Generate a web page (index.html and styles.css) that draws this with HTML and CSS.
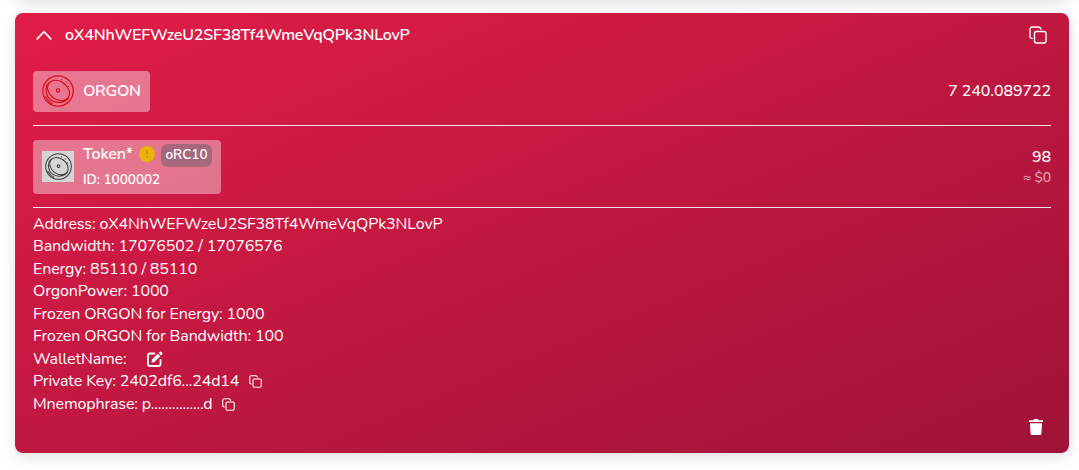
FILE: index.html
```html
<!DOCTYPE html>
<html lang="en">

<head>
    <meta charset="UTF-8">
    <meta name="viewport" content="width=device-width, initial-scale=1.0">
    <title>Wallet</title>
    <link rel="stylesheet" href="styles.css">
</head>

<body>
<svg class="sprite" width="0" height="0">
    <symbol id="copy" viewBox="0 0 18 18">
        <path d="M1 11.2V3.5Q1 1 3.5 1H9Q11.5 1 11.9 3.2M1 11.2Q1 12.3 3.2 12.4"/>
        <rect x="5.5" y="5.5" width="11.5" height="11.5" rx="2"/>
    </symbol>
    <symbol id="coin" viewBox="0 0 32 32">
        <circle cx="16" cy="16" r="15.2"/>
        <ellipse cx="16.5" cy="15.5" rx="12" ry="9" transform="rotate(38 16.5 15.5)"/>
        <path d="M6.500 8C2.500 13 3.500 21 9 25C14 28.500 22 28.500 26.500 23"/>
        <circle cx="16" cy="15.500" r="1.600"/>
        <path d="M3.300 21.500Q6 26.500 10.500 28.800"/>
        <path d="M19.500 4.500h.2M24 7h.2M22 9h.2M26.500 11.500h.2"/>
    </symbol>
</svg>
<div class="prev-card"></div>
<div class="card">
    <div class="header">
        <svg class="chevron" viewBox="0 0 16 10"><path d="M1.200 8.800L8 1.700L14.800 8.800"/></svg>
        <span class="title">oX4NhWEFWzeU2SF38Tf4WmeVqQPk3NLovP</span>
        <svg class="copy copy-lg"><use href="#copy"/></svg>
    </div>

    <div class="asset">
        <div class="badge">
            <svg class="coin"><use href="#coin"/></svg>
            <span class="name">ORGON</span>
        </div>
        <div class="balance">7 240.089722</div>
    </div>

    <div class="asset asset-token">
        <div class="badge badge-token">
            <div class="logo"><svg class="coin coin-grey"><use href="#coin"/></svg></div>
            <div class="token">
                <div class="token-top">
                    <span class="token-name">Token*</span>
                    <svg class="warn" viewBox="0 0 16 16"><circle cx="8" cy="8" r="8"/><path d="M8 4.200V8.600M8 10.500V11.700"/></svg>
                    <span class="tag">oRC10</span>
                </div>
                <div class="token-id">ID: 1000002</div>
            </div>
        </div>
        <div class="balance">
            <div class="amount">98</div>
            <div class="usd">≈ $0</div>
        </div>
    </div>

    <div class="details">
        <div class="row">Address: oX4NhWEFWzeU2SF38Tf4WmeVqQPk3NLovP</div>
        <div class="row">Bandwidth: 17076502 / 17076576</div>
        <div class="row">Energy: 85110 / 85110</div>
        <div class="row">OrgonPower: 1000</div>
        <div class="row">Frozen ORGON for Energy: 1000</div>
        <div class="row">Frozen ORGON for Bandwidth: 100</div>
        <div class="row">
            <span>WalletName:</span>
            <svg class="edit" viewBox="0 0 16 16">
                <path class="edit-box" d="M7.500 2.500H3Q1 2.500 1 4.500V13Q1 15 3 15H11.500Q13.500 15 13.500 13V9"/>
                <path class="edit-pen" d="M4.500 11.700L5 8.600L10.800 2.800L13.300 5.300L7.500 11.100ZM11.600 2L12.700 .9Q13.500 .2 14.300 .9L15.200 1.800Q15.900 2.600 15.200 3.400L14.100 4.500Z"/>
            </svg>
        </div>
        <div class="row">
            <span>Private Key: 2402df6...24d14</span>
            <svg class="copy"><use href="#copy"/></svg>
        </div>
        <div class="row">
            <span>Mnemophrase: p...............d</span>
            <svg class="copy"><use href="#copy"/></svg>
        </div>
    </div>

    <div class="footer">
        <svg class="trash" viewBox="0 0 14 16"><path d="M0 1.200H4.300L5 0H9L9.700 1.200H14V3H0ZM1 4.300H13L12.400 14.700Q12.300 16 11 16H3Q1.700 16 1.600 14.700Z"/></svg>
    </div>
</div>
</body>

</html>
```
FILE: styles.css
```css
* {
    box-sizing: border-box;
}

body {
    margin: 0;
    height: 470px;
    overflow: hidden;
    background: #fff;
    color: #fff;
    font-family: Nunito, Lato, sans-serif;
    font-size: 16px;
    line-height: 22.5px;
    white-space: nowrap;
}

.sprite {
    display: block;
}

.prev-card {
    height: 13px;
    margin: -13px 10px 13px 15px;
    border-radius: 8px;
    box-shadow: 0 0 15px rgba(0, 0, 0, 0.18);
}

.card {
    display: flex;
    flex-direction: column;
    width: 1054px;
    height: 440px;
    margin-left: 15px;
    padding: 0 18px;
    border-radius: 8px;
    background: linear-gradient(to bottom right, #e11d48, #9f1239);
    box-shadow: 0 4px 15px rgba(0, 0, 0, 0.13);
}

.header {
    display: flex;
    align-items: center;
    height: 44px;
    padding: 0 4px 0 3px;
}

.title {
    margin-left: 13px;
    font-weight: 600;
    letter-spacing: -0.17px;
}

.chevron {
    width: 16px;
    height: 10px;
    fill: none;
    stroke: #fff;
    stroke-width: 1.7;
    stroke-linecap: round;
}

.copy {
    width: 13px;
    height: 13px;
    margin: 1px 0 0 10px;
    fill: none;
    stroke: #fff;
    stroke-width: 1.5;
    stroke-linecap: round;
}

.copy-lg {
    width: 18px;
    height: 18px;
    margin: 0 0 0 auto;
    stroke-width: 1.4;
}

.asset {
    display: flex;
    align-items: center;
    justify-content: space-between;
    height: 69px;
    border-bottom: 1px solid #f3e3e8;
}

.asset-token {
    height: 82px;
}

.badge {
    display: flex;
    align-items: center;
    width: 117px;
    height: 41px;
    padding-left: 9px;
    border-radius: 4px;
    background: rgba(255, 255, 255, 0.4);
}

.badge-token {
    width: 188px;
    height: 54px;
}

.coin {
    flex: none;
    width: 32px;
    height: 32px;
    fill: none;
    stroke: #d90f1c;
    stroke-width: 1.2;
    stroke-linecap: round;
}

.logo {
    display: flex;
    align-items: center;
    justify-content: center;
    width: 32px;
    height: 31px;
    background: #d6d5d5;
}

.coin-grey {
    width: 27px;
    height: 27px;
    stroke: #3c3c3c;
}

.name {
    margin-left: 9px;
    font-weight: 600;
    letter-spacing: -0.3px;
}

.token {
    margin-left: 9px;
}

.token-top {
    display: flex;
    align-items: center;
    height: 25px;
}

.token-name {
    width: 50px;
    font-weight: 600;
    letter-spacing: -0.1px;
}

.warn {
    width: 16px;
    height: 16px;
    margin: 0 6px;
    fill: #eab308;
    stroke: #c88d12;
    stroke-width: 1.5;
}

.warn circle {
    stroke: none;
}

.tag {
    width: 51px;
    height: 23px;
    margin-top: 2px;
    border-radius: 7px;
    background: rgba(75, 85, 99, 0.4);
    font-size: 13.5px;
    font-weight: 600;
    text-align: center;
}

.token-id {
    padding-top: 2px;
    font-size: 13.5px;
    font-weight: 600;
}

.balance {
    font-weight: 500;
    letter-spacing: -0.1px;
    text-align: right;
}

.amount {
    line-height: 22px;
}

.usd {
    font-size: 14px;
    line-height: 20px;
    letter-spacing: -0.2px;
    opacity: 0.6;
}

.details {
    padding-top: 4.5px;
    letter-spacing: -0.12px;
}

.row {
    display: flex;
    align-items: center;
    height: 22.5px;
}

.edit {
    width: 16px;
    height: 16px;
    margin-left: 20px;
}

.edit-box {
    fill: none;
    stroke: #fff;
    stroke-width: 1.8;
    stroke-linecap: round;
}

.edit-pen {
    fill: #fff;
}

.footer {
    display: flex;
    justify-content: flex-end;
    margin-top: auto;
    padding: 0 8px 18px 0;
}

.trash {
    width: 14px;
    height: 16px;
    fill: #fff;
}
```
